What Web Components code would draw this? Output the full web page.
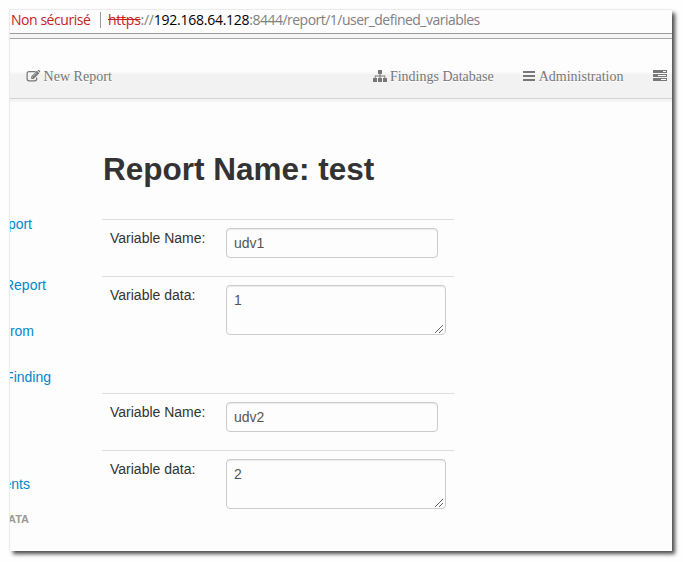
<!DOCTYPE html>
<html lang="fr">
<head>
<meta charset="utf-8">
<title>User defined variables</title>
<style>
html,body{margin:0;background:#fefefe}
body{width:683px;height:562px;overflow:hidden;font:14px/20px "Liberation Sans",Arial,sans-serif;color:#333}
</style>
</head>
<body>
<app-window>
  <address-bar slot="top"></address-bar>
  <nav-bar slot="top">
    <nav-item icon="edit" style="margin-left:16px;--ls:.03px">New Report</nav-item>
    <nav-item icon="sitemap" style="margin-left:auto">Findings Database</nav-item>
    <nav-item icon="bars" style="margin-left:30px">Administration</nav-item>
    <nav-item icon="tasks" style="margin-left:30px;width:18.5px"></nav-item>
  </nav-bar>
  <side-nav slot="side">
    <side-link style="width:22px;margin-top:115px">port</side-link>
    <side-link style="width:36px;margin-top:41px">Report</side-link>
    <side-link style="width:24px;margin-top:26px">rom</side-link>
    <side-link style="width:41px;margin-top:26px">Finding</side-link>
    <side-link style="width:20px;margin-top:87px">ents</side-link>
    <side-link header style="width:19px;margin-top:15px">ATA</side-link>
  </side-nav>
  <report-title>Report Name: test</report-title>
  <variable-group>
    <variable-row label="Variable Name:">udv1</variable-row>
    <variable-row label="Variable data:" area>1</variable-row>
  </variable-group>
  <variable-group>
    <variable-row label="Variable Name:">udv2</variable-row>
    <variable-row label="Variable data:" area>2</variable-row>
  </variable-group>
</app-window>
<script>
function define(name, html, setup){
  const t=document.createElement('template'); t.innerHTML=html;
  customElements.define(name, class extends HTMLElement{
    constructor(){super();this.attachShadow({mode:'open'}).append(t.content.cloneNode(true));}
    connectedCallback(){if(setup)setup(this,this.shadowRoot);}
  });
}
define('app-window',`<style>
:host{display:block;padding:10px 11px 11px 10px}
.w{width:662px;height:541px;background:#fdfdfd;display:flex;flex-direction:column;box-shadow:-1px -1px 0 0 #ebebeb,3px 3px 4px 0 #4a4a4a}
.in{display:flex;flex-direction:column;height:541px;overflow:hidden;background:#fdfdfd}
.body{display:flex;flex:1}.main{width:352px;margin-left:16px}
</style><div class="w"><div class="in"><slot name="top"></slot><div class="body"><slot name="side"></slot><div class="main"><slot></slot></div></div></div></div>`);
define('address-bar',`<style>
:host{display:block;height:29px;flex:none;font:14px/20px "Open Sans","Noto Sans",sans-serif}
.r{display:flex;height:23px;align-items:center;border-bottom:1px solid #9c9c9c;white-space:pre}
.b{height:4px;background:#f5f5f5;border-bottom:1px solid #a7a7a7}
.n{color:#c5221f;width:89px;padding-left:1px;box-sizing:border-box;letter-spacing:-.45px}
.v{width:1px;height:16px;background:#999;margin:-3px 7px 0 1px}
.n,.u{margin-top:-3px}
.u{color:#808080;letter-spacing:-.25px}.s{color:#c5221f;text-decoration:line-through}.h{color:#000}.p{letter-spacing:-.52px}
</style><div class="r"><span class="n">Non sécurisé</span><span class="v"></span><span class="u"><span class="s">https</span>://<span class="h">192.168.64.128</span><span class="p">:8444/report/1/user_defined_variables</span></span></div><div class="b"></div>`);
define('nav-bar',`<style>
:host{display:flex;flex:none;height:26px;margin-top:33px;background:linear-gradient(#f8f8f8 2px,#f2f2f2 2px);border-bottom:1px solid #d2d2d2;box-shadow:0 3px 0 #f4f4f4;align-items:flex-start}
</style><slot></slot>`);
const icons={
edit:'<path fill="none" stroke="#777" stroke-width="1.2" d="M9.6 1.7H3.1Q1.1 1.7 1.1 3.7v5.1q0 2 2 2h5.6q2 0 2-2V7.4"/><path fill="#777" d="M5.2 9V6.5l5.7-5.7 2.4 2.4L7.6 9zM11.5.4l.5-.4q.5-.4 1 0l1.1 1.1q.4.5 0 .9l-.4.5z"/><path stroke="#f7f7f7" stroke-width=".6" d="M7 6.3l3.6-3.6M5.9 7.1l1 1"/>',
sitemap:'<path fill="#777" d="M5 0h4v4H7.5v1.5h4.8V8H14v4h-4V8h1.4V6.4H7.5V8H9v4H5V8h1.5V6.4H2.6V8H4v4H0V8h1.7V5.5h4.8V4H5z"/>',
bars:'<path fill="#777" d="M0 1h12v2H0zM0 5h12v2H0zM0 9h12v2H0z"/>',
tasks:'<path fill="#777" d="M0 0h14v3H0zM0 4h14v3H0zM0 8h14v3H0z"/><path fill="#fff" d="M10 1h3v1h-3zM5 5h8v1H5zM8 9h5v1H8z"/>'};
define('nav-item',`<style>
:host{display:flex;white-space:pre;font:14px/16px "Liberation Serif",serif;color:#777;letter-spacing:var(--ls,0);margin-top:-3px;text-shadow:0 1px 0 #fff}
svg{flex:none;margin:1px 3px 0 -.5px}
</style><svg width="14" height="12"></svg><slot></slot>`,(e,s)=>{const k=e.getAttribute('icon'),g=s.querySelector('svg');g.innerHTML=icons[k];if(k==='bars')g.setAttribute('width',12.5);if(k==='edit')g.setAttribute('width',15);});
define('side-nav',`<style>:host{display:flex;flex-direction:column;width:76px;color:#0088cc}</style><slot></slot>`);
define('side-link',`<style>
:host{display:flex;justify-content:flex-end;height:20px;white-space:pre;color:#0088cc}
:host([header]){font-size:11px;font-weight:bold;color:#999}
</style><slot></slot>`);
define('report-title',`<style>:host{display:block;font-weight:bold;font-size:31.5px;line-height:40px;margin:50px 0 30px 1px;color:#333;white-space:pre}</style><slot></slot>`);
define('variable-group',`<style>:host{display:block;width:352px;height:174px}</style><slot></slot>`);
define('variable-row',`<style>
:host{display:flex;height:56px;border-top:1px solid #ddd}
.l{width:116px;padding:8px 0 0 8px;box-sizing:border-box;color:#333}
.f{position:relative;margin:8px 0 0 8px;width:212px;height:30px;box-sizing:border-box;border:1px solid #ccc;border-radius:4px;padding:4px 6px 4px 7px;color:#555;box-shadow:inset 0 1px 1px rgba(0,0,0,.075)}
:host([area]) .f{width:220px;height:50px}
svg{display:none;position:absolute;right:1px;bottom:1px}
:host([area]) svg{display:block}
</style><div class="l"></div><div class="f"><slot></slot><svg width="9" height="9" shape-rendering="crispEdges"><path fill="#666" d="M0 8h1v1H0zM1 7h1v1H1zM2 6h1v1H2zM3 5h1v1H3zM4 4h1v1H4zM5 3h1v1H5zM6 2h1v1H6zM7 1h1v1H7zM4 8h1v1H4zM5 7h1v1H5zM6 6h1v1H6zM7 5h1v1H7z"/></svg></div>`,(e,s)=>{s.querySelector('.l').textContent=e.getAttribute('label');});
</script>
</body>
</html>
